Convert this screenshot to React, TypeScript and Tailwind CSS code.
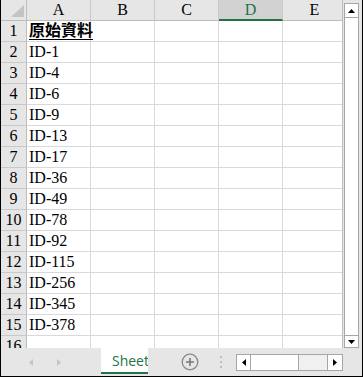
import React from "react"

const cols = ["A", "B", "C", "D", "E"]
const data = ["原始資料", "ID-1", "ID-4", "ID-6", "ID-9", "ID-13", "ID-17", "ID-36", "ID-49", "ID-78", "ID-92", "ID-115", "ID-256", "ID-345", "ID-378", ""]

const serif = "font-['Liberation_Serif','Noto_Sans_CJK_TC',serif]"

const Tri = ({ dir, color = "#000" }: { dir: "up" | "down" | "left" | "right"; color?: string }) => {
	const pts = {
		up: "0,4 7,4 3.5,0",
		down: "0,0 7,0 3.5,4",
		left: "4,0 4,7 0,3.5",
		right: "0,0 0,7 4,3.5",
	}[dir]
	const w = dir === "up" || dir === "down" ? 7 : 4
	const h = dir === "up" || dir === "down" ? 4 : 7
	return (
		<svg width={w} height={h} viewBox={`0 0 ${w} ${h}`}>
			<polygon points={pts} fill={color} />
		</svg>
	)
}

export default function App() {
	return (
		<div className={`w-[363px] h-[377px] flex flex-col bg-[#e6e6e6] border-l border-r border-b border-black overflow-hidden ${serif}`}>
			<div className="flex h-[348px] shrink-0">
				{/* grid */}
				<div className="w-[342px] shrink-0 bg-white overflow-hidden border-r border-[#bdbdbd]">
					<div className="flex h-[21px]">
						<div className="w-[26px] shrink-0 bg-[#e6e6e6] border-r border-b border-[#bdbdbd] flex items-end justify-end pr-[2px] pb-[3px]">
							<svg width="13" height="12" viewBox="0 0 13 12">
								<polygon points="0,12 13,12 13,0" fill="#c4c4c4" />
							</svg>
						</div>
						{cols.map((c) => (
							<div
								key={c}
								className={`w-[64px] shrink-0 flex items-center justify-center text-[16px] leading-none border-r border-[#c9c9c9] ${
									c === "D"
										? "bg-[#d2d2d2] text-[#217346] border-b-2 border-b-[#217346]"
										: "bg-[#e6e6e6] text-black border-b border-b-[#bdbdbd]"
								}`}
							>
								{c}
							</div>
						))}
					</div>
					{data.map((v, i) => (
						<div key={i} className="flex h-[21px]">
							<div className="w-[26px] shrink-0 bg-[#e6e6e6] border-r border-b border-r-[#bdbdbd] border-b-[#c9c9c9] flex items-center justify-center text-[16px] leading-none">
								{i + 1}
							</div>
							{cols.map((c, j) => (
								<div key={c} className="w-[64px] shrink-0 border-r border-b border-[#d9d9d9] pl-[2px] flex items-center text-[16px] leading-none whitespace-nowrap">
									{j === 0 ? (i === 0 ? <span className="font-bold underline underline-offset-[3px]">{v}</span> : v) : ""}
								</div>
							))}
						</div>
					))}
				</div>
				{/* vertical scrollbar */}
				<div className="flex-1 pl-[1px] pt-[3px]">
					<div className="w-[15px] h-full border border-[#a6a6a6] bg-white flex flex-col">
						<div className="h-[14px] border-b border-[#a6a6a6] flex items-center justify-center">
							<Tri dir="up" />
						</div>
						<div className="flex-1" />
						<div className="h-[12px] border-t border-[#a6a6a6] flex items-center justify-center">
							<Tri dir="down" />
						</div>
					</div>
				</div>
			</div>
			{/* sheet bar */}
			<div className="flex-1 flex items-stretch">
				<div className="w-[100px] shrink-0 flex items-center pl-[28px] gap-[24px]">
					<Tri dir="left" color="#c4c4c4" />
					<Tri dir="right" color="#c4c4c4" />
				</div>
				<div className="w-[47px] h-[26px] shrink-0 bg-white border-b-2 border-[#217346] overflow-hidden pl-[11px] pt-[4px] font-['Open_Sans',sans-serif] text-[14px] leading-[18px] text-[#217346] whitespace-nowrap">
					Sheet
				</div>
				<div className="w-[33px] shrink-0" />
				<div className="flex items-center">
					<svg width="18" height="18" viewBox="0 0 18 18">
						<circle cx="9" cy="9" r="7.8" fill="none" stroke="#8a8a8a" strokeWidth="1.3" />
						<path d="M9 5v8M5 9h8" stroke="#7a7a7a" strokeWidth="1.6" />
					</svg>
				</div>
				<div className="w-[21px] shrink-0" />
				<div className="flex flex-col justify-center gap-[3px]">
					<div className="w-[2px] h-[2px] bg-[#bdbdbd]" />
					<div className="w-[2px] h-[2px] bg-[#bdbdbd]" />
					<div className="w-[2px] h-[2px] bg-[#bdbdbd]" />
				</div>
				<div className="w-[14px] shrink-0" />
				<div className="flex items-center">
					<div className="w-[107px] h-[17px] border border-[#a6a6a6] flex bg-[#f0f0f0]">
						<div className="w-[14px] border-r border-[#a6a6a6] bg-white flex items-center justify-center">
							<Tri dir="left" />
						</div>
						<div className="w-[48px] bg-white border-r border-[#a6a6a6]" />
						<div className="flex-1" />
						<div className="w-[15px] border-l border-[#a6a6a6] bg-white flex items-center justify-center">
							<Tri dir="right" />
						</div>
					</div>
				</div>
			</div>
		</div>
	)
}
